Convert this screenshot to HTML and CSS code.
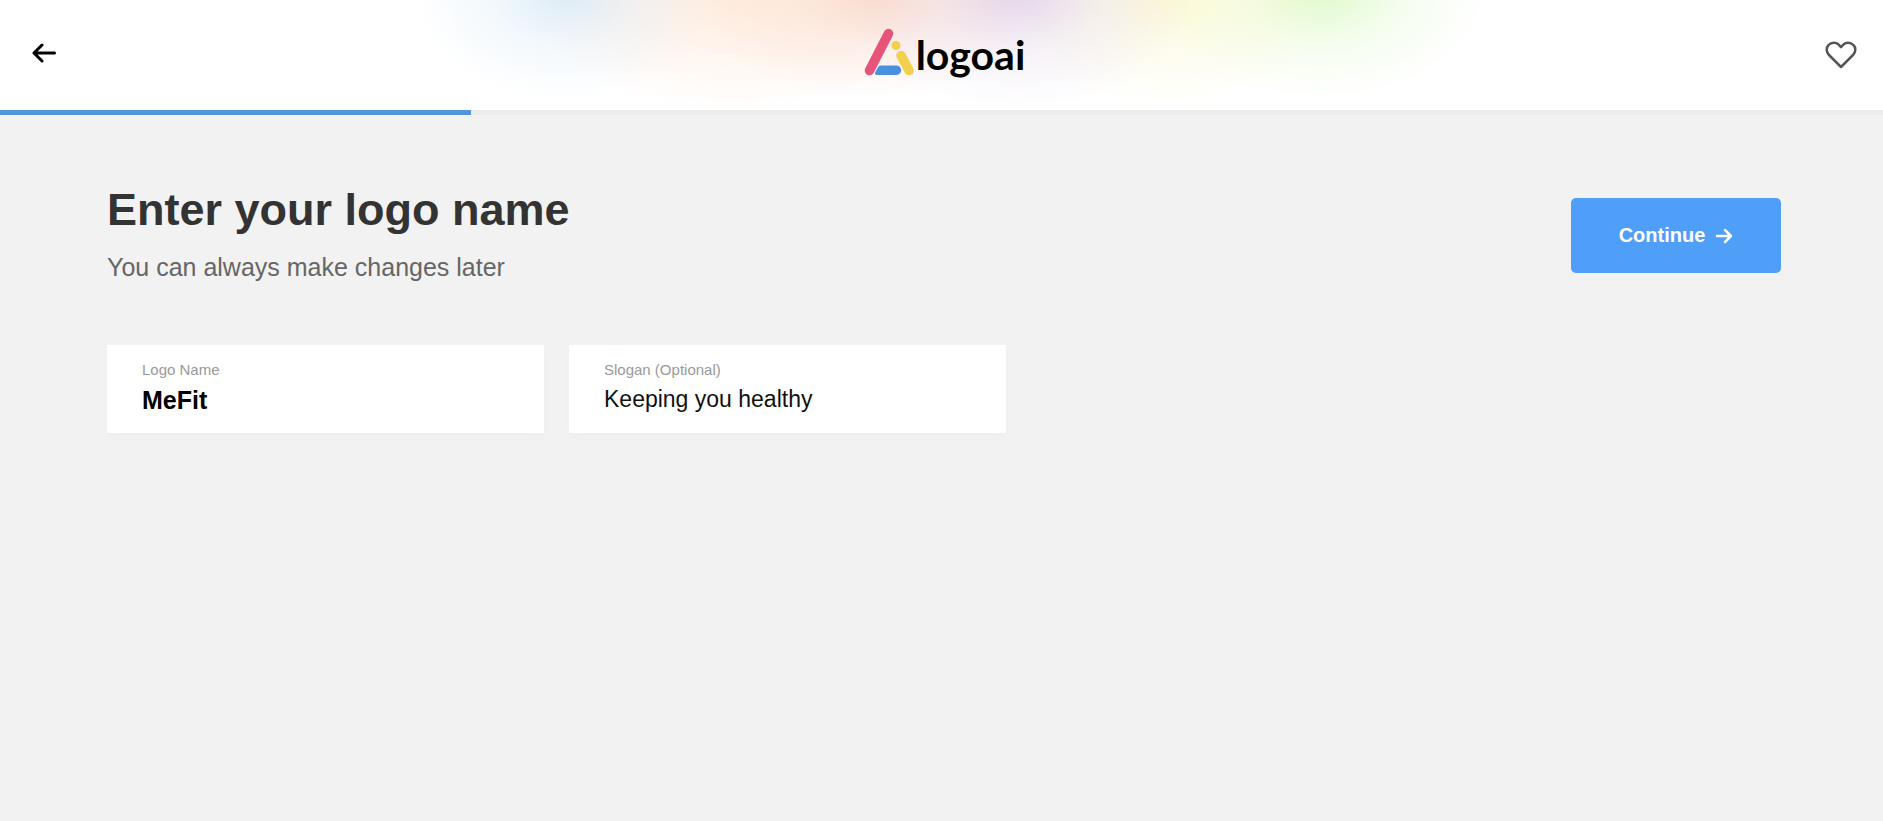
FILE: index.html
```html
<!DOCTYPE html>
<html lang="en">
<head>
  <meta charset="UTF-8">
  <meta name="viewport" content="width=device-width, initial-scale=1.0">
  <title>Enter your logo name - logoai</title>
  <link rel="stylesheet" href="styles.css">
</head>
<body>
  <header class="header">
    <button type="button" class="icon-btn back" aria-label="Back">
      <svg width="24" height="20" viewBox="0 0 24 20" fill="none" stroke="#000" stroke-width="3" stroke-linecap="round" stroke-linejoin="round">
        <path d="M22.5 10H2M10 2L2 10l8 8"/>
      </svg>
    </button>

    <a href="#" class="logo">
      <svg width="50" height="48" viewBox="0 0 50 48" stroke-linecap="round">
        <path d="M24.500 5.500L5.500 42.500" stroke="#e8537a" stroke-width="9.500"/>
        <circle cx="32" cy="17.500" r="4.500" fill="#f2cf4d"/>
        <path d="M37 27.500l8 15" stroke="#f2cf4d" stroke-width="9.500"/>
        <path d="M17 37.500h15.500a4.700 4.700 0 0 1 0 9.400H13c-1.800 0-2.500-1.300-1.700-2.700l2.900-5.100c.6-1 1.400-1.600 2.800-1.600z" fill="#4a90dc"/>
      </svg>
      <span>logoai</span>
    </a>

    <button type="button" class="icon-btn favorites" aria-label="Favorites">
      <svg width="32" height="28" viewBox="0 0 32 28" fill="none" stroke="#555" stroke-width="2.500" stroke-linejoin="round">
        <path d="M16 26L4 14C1 11 1 6.500 3.600 4 6.500 1 11 1 13.500 3.500L16 6.200l2.500-2.700C21 1 25.500 1 28.400 4 31 6.500 31 11 28 14z"/>
      </svg>
    </button>
  </header>

  <div class="progress">
    <div class="progress-bar"></div>
  </div>

  <main>
    <form>
      <div class="top">
        <div class="heading">
          <h1>Enter your logo name</h1>
          <p>You can always make changes later</p>
        </div>
        <button type="submit" class="continue">
          Continue
          <svg width="18" height="16" viewBox="0 0 18 16" fill="none" stroke="#fff" stroke-width="2.500" stroke-linecap="round" stroke-linejoin="round">
            <path d="M2 8h14M10 2l6 6-6 6"/>
          </svg>
        </button>
      </div>

      <div class="fields">
        <div class="field">
          <label for="logoName">Logo Name</label>
          <input type="text" id="logoName" class="name" value="MeFit">
        </div>
        <div class="field">
          <label for="slogan">Slogan (Optional)</label>
          <input type="text" id="slogan" value="Keeping you healthy">
        </div>
      </div>
    </form>
  </main>
</body>
</html>
```
FILE: styles.css
```css
* {
  margin: 0;
  padding: 0;
  box-sizing: border-box;
}
body {
  font-family: Arial, "Liberation Sans", sans-serif;
  background-color: #f2f2f2;
  color: #333;
}
button {
  border: none;
  cursor: pointer;
  font-family: inherit;
}

/* header */
.header {
  display: grid;
  grid-template-columns: 1fr auto 1fr;
  align-items: center;
  height: 110px;
  padding: 0 26px 0 32px;
  background-color: #fff;
  background-image:
    radial-gradient(150px 110px at 30% -10px, rgba(205, 228, 245, 0.7), rgba(205, 228, 245, 0.25) 50%, transparent),
    radial-gradient(210px 120px at 39% -10px, rgba(255, 226, 205, 0.7), rgba(255, 226, 205, 0.35) 50%, transparent),
    radial-gradient(170px 110px at 46% -10px, rgba(245, 200, 185, 0.7), rgba(245, 200, 185, 0.25) 50%, transparent),
    radial-gradient(180px 120px at 54% -10px, rgba(220, 203, 230, 0.8), rgba(220, 203, 230, 0.25) 50%, transparent),
    radial-gradient(170px 120px at 62% -10px, rgba(252, 247, 200, 0.8), rgba(252, 247, 200, 0.3) 50%, transparent),
    radial-gradient(170px 110px at 70% -10px, rgba(215, 248, 190, 0.8), rgba(215, 248, 190, 0.25) 50%, transparent);
}
.icon-btn {
  display: flex;
  background: none;
}
.back {
  justify-self: start;
  padding-bottom: 5px;
}
.favorites {
  justify-self: end;
}
.logo {
  display: flex;
  align-items: center;
  gap: 2px;
  padding-bottom: 7px;
  color: #000;
  font-family: Lato, sans-serif;
  font-size: 41px;
  font-weight: bold;
  line-height: 48px;
  text-decoration: none;
}
.logo span {
  padding-top: 7px;
}

/* progress */
.progress {
  height: 5px;
  background-color: #ececec;
}
.progress-bar {
  width: 25%;
  height: 100%;
  background-color: #4f96dc;
}

main {
  padding: 69px 102px 60px 107px;
}
.top {
  display: flex;
  justify-content: space-between;
  align-items: center;
  margin-bottom: 58px;
}
.heading {
  padding-bottom: 5px;
}
h1 {
  margin-bottom: 16px;
  font-size: 45px;
  line-height: 52px;
}
.heading p {
  color: #666;
  font-size: 25px;
  line-height: 30px;
}
.continue {
  display: flex;
  align-items: center;
  justify-content: center;
  gap: 10px;
  width: 210px;
  height: 75px;
  border-radius: 5px;
  background-color: #4f9ef8;
  color: #fff;
  font-size: 20px;
  font-weight: bold;
}

/* form fields */
.fields {
  display: flex;
  gap: 25px;
}
.field {
  flex: 0 1 437px;
  padding: 16px 35px;
  background-color: #fff;
  box-shadow: 0 4px 8px rgba(0, 0, 0, 0.02);
}
.field label {
  display: block;
  margin-bottom: 6px;
  color: #999;
  font-size: 15px;
  line-height: 18px;
}
.field input {
  display: block;
  width: 100%;
  height: 32px;
  padding-bottom: 4px;
  border: none;
  outline: none;
  background: none;
  color: #111;
  font-family: inherit;
  font-size: 23px;
}
.field .name {
  padding-bottom: 2px;
  color: #000;
  font-size: 25px;
  font-weight: bold;
}
```
